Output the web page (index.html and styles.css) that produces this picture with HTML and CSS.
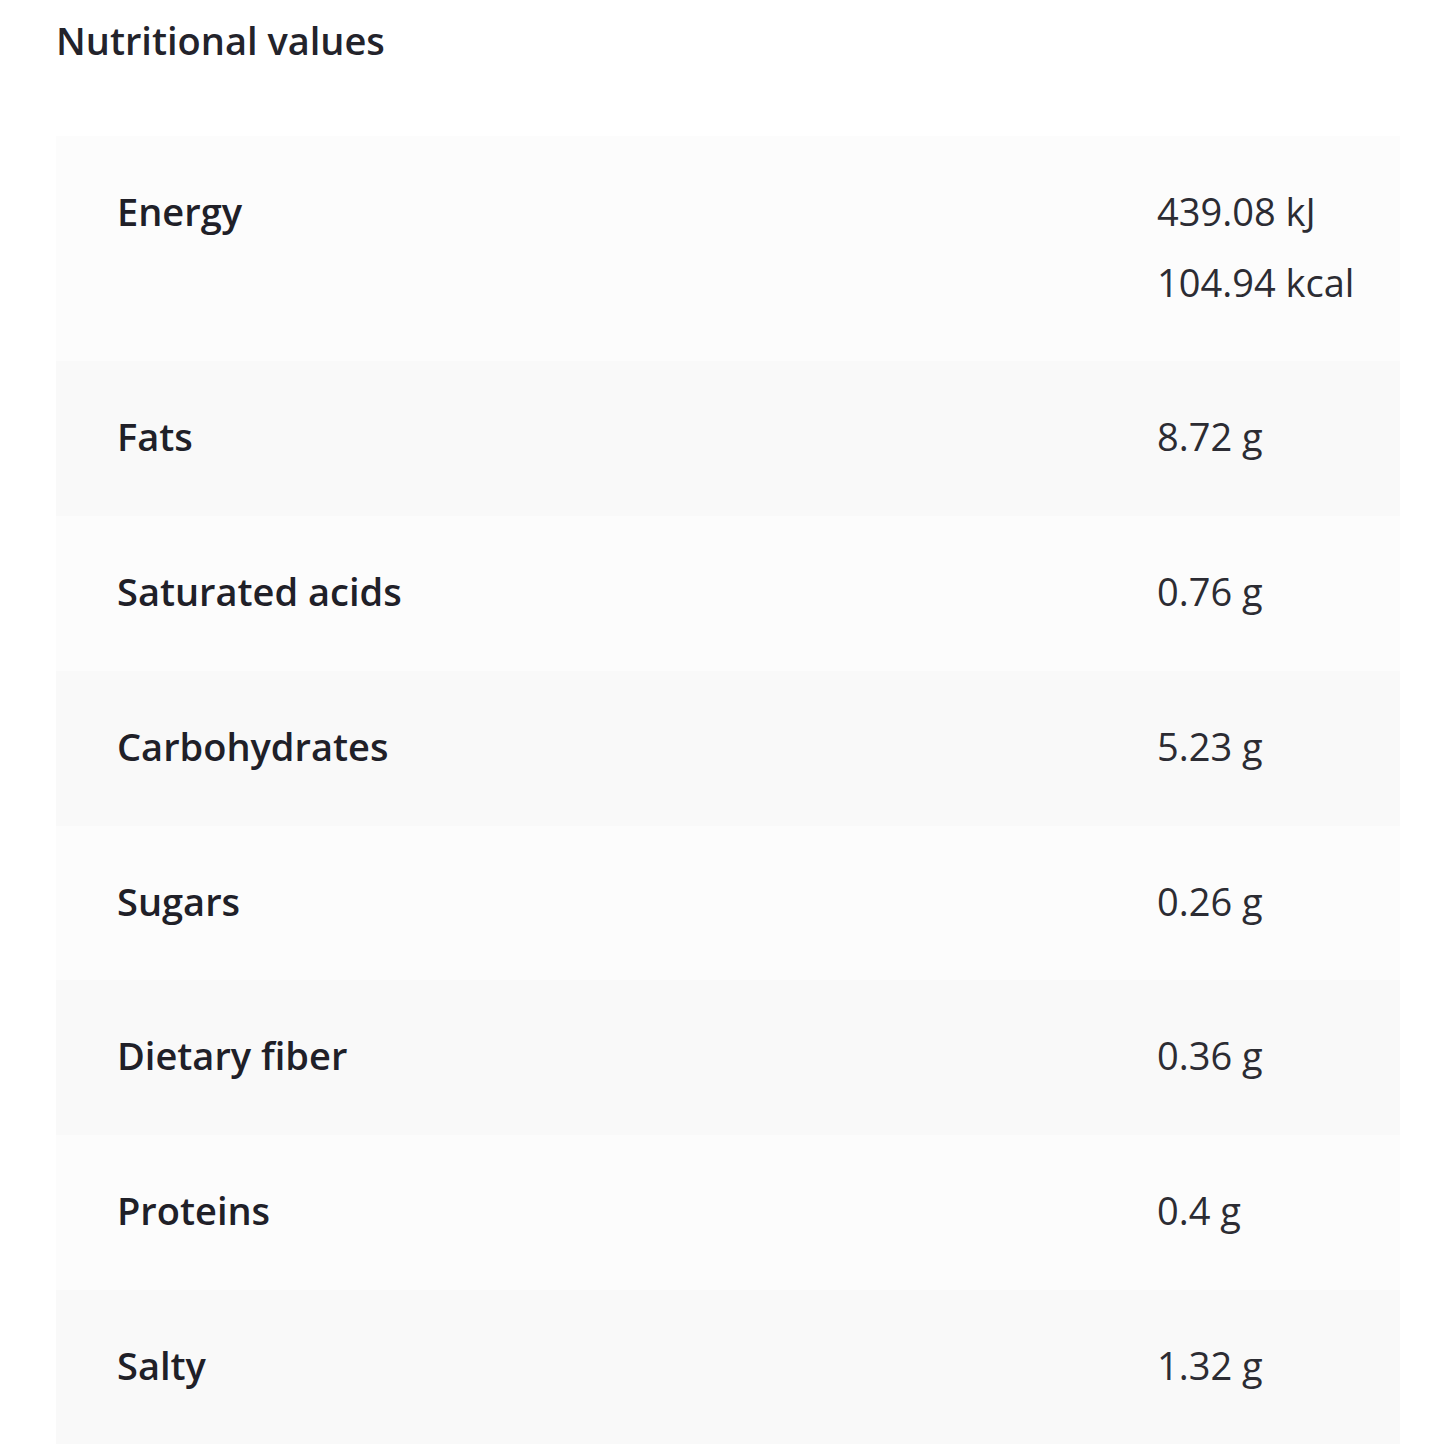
FILE: index.html
```html
<!DOCTYPE html>
<html lang="en">
<head>
<meta charset="utf-8">
<title>Nutritional values</title>
<link rel="stylesheet" href="styles.css">
</head>
<body>
<main class="page">
  <h2 class="title">Nutritional values</h2>
  <div class="table">
    <div class="row odd">
      <div class="label">Energy</div>
      <div class="value"><div>439.08 kJ</div><div>104.94 kcal</div></div>
    </div>
    <div class="row even">
      <div class="label">Fats</div>
      <div class="value">8.72 g</div>
    </div>
    <div class="row odd">
      <div class="label">Saturated acids</div>
      <div class="value">0.76 g</div>
    </div>
    <div class="row even">
      <div class="label">Carbohydrates</div>
      <div class="value">5.23 g</div>
    </div>
    <div class="row odd">
      <div class="label">Sugars</div>
      <div class="value">0.26 g</div>
    </div>
    <div class="row even">
      <div class="label">Dietary fiber</div>
      <div class="value">0.36 g</div>
    </div>
    <div class="row odd">
      <div class="label">Proteins</div>
      <div class="value">0.4 g</div>
    </div>
    <div class="row even">
      <div class="label">Salty</div>
      <div class="value">1.32 g</div>
    </div>
  </div>
</main>
</body>
</html>
```
FILE: styles.css
```css
html, body {
  margin: 0;
  padding: 0;
  background: #ffffff;
}
body {
  font-family: "Open Sans", "Noto Sans", sans-serif;
  color: #222228;
}
.page {
  padding: 17px 45px 0 56px;
}
.title {
  margin: 0;
  font-size: 38px;
  line-height: 46px;
  font-weight: 600;
  color: #23232b;
}
.table {
  margin-top: 73px;
  display: flex;
  flex-direction: column;
}
.row {
  display: grid;
  grid-template-columns: 1fr 243px;
  padding: 40px 0 44px;
}
.row.odd { background: #fcfcfc; }
.row.even { background: #f9f9f9; }
.label {
  padding-left: 61px;
  font-size: 38px;
  line-height: 70.7px;
  font-weight: 600;
  color: #202028;
}
.value {
  font-size: 38px;
  line-height: 70.7px;
  font-weight: 400;
  color: #2c2c33;
}
```
